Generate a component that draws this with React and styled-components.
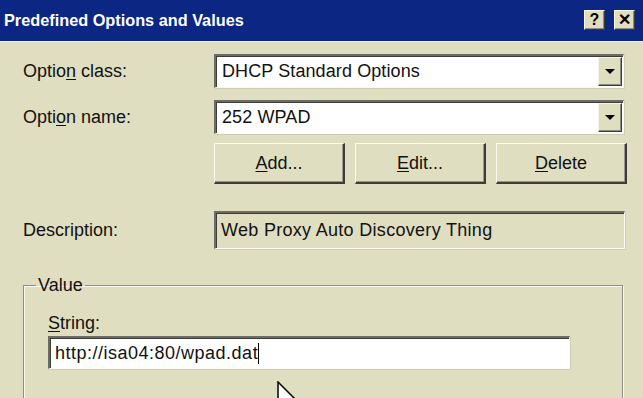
import React from "react";
import styled, { createGlobalStyle } from "styled-components";

const Global = createGlobalStyle`
  html, body { margin: 0; padding: 0; background: #E0DEC1; }
  body { font-family: "Liberation Sans", Arial, sans-serif; }
`;

const BG = "#E0DEC1";

const Window = styled.div`
  position: relative;
  width: 643px;
  height: 398px;
  overflow: hidden;
  background: ${BG};
  color: #111;
  font-family: "Liberation Sans", Arial, sans-serif;
  font-size: 18px;
`;

const TitleBar = styled.div`
  height: 41px;
  background: #0B2683;
  border-bottom: 1px solid #F2F0E2;
  display: flex;
  align-items: center;
  padding: 0 8px 0 4px;
`;

const Title = styled.div`
  flex: 1;
  color: #fff;
  font-weight: bold;
  font-size: 16.3px;
`;

const CaptionButtons = styled.div`
  display: flex;
  gap: 9px;
  margin-top: -2px;
`;

const CaptionButton = styled.div`
  width: 21px;
  height: 20px;
  box-sizing: border-box;
  background: ${BG};
  border-top: 1px solid #fbfaf1;
  border-left: 1px solid #fbfaf1;
  border-right: 1px solid #3a3a36;
  border-bottom: 1px solid #3a3a36;
  box-shadow: inset -1px -1px 0 #8c8b7f;
  display: flex;
  align-items: center;
  justify-content: center;
  font-weight: bold;
  font-size: 16px;
  color: #000;
  line-height: 1;
`;

const Body = styled.div`
  padding: 12px 0 0 23px;
  display: flex;
  flex-direction: column;
`;

const Row = styled.div`
  display: flex;
  align-items: center;
  margin-top: ${(p) => p.$gap || 0}px;
`;

const Label = styled.div`
  width: 191px;
  flex: none;
  line-height: 21px;
`;

const Key = styled.span`
  text-decoration: underline;
  text-underline-offset: 2px;
`;

const sunken = `
  box-sizing: border-box;
  border-top: 2px solid #6c6b64;
  border-left: 2px solid #6c6b64;
  border-right: 1px solid #fbfaf2;
  border-bottom: 1px solid #fbfaf2;
  box-shadow: inset 1px 1px 0 #3c3c38, 1px 1px 0 #cfcdb4;
`;

const Combo = styled.div`
  ${sunken}
  width: 410px;
  height: 34px;
  background: #fff;
  display: flex;
  align-items: center;
  padding-left: 6px;
`;

const ComboText = styled.div`
  flex: 1;
  white-space: nowrap;
  letter-spacing: 0.1px;
`;

const DropButton = styled.div`
  width: 24px;
  height: 29px;
  margin-right: 1px;
  box-sizing: border-box;
  background: ${BG};
  border-top: 1px solid #f6f5ea;
  border-left: 1px solid #f6f5ea;
  border-right: 1px solid #3c3c38;
  border-bottom: 1px solid #3c3c38;
  box-shadow: inset -1px -1px 0 #8c8b7f;
  display: flex;
  align-items: center;
  justify-content: center;
`;

const Arrow = styled.div`
  width: 0;
  height: 0;
  border-left: 5px solid transparent;
  border-right: 5px solid transparent;
  border-top: 5px solid #000;
`;

const ButtonRow = styled.div`
  display: flex;
  gap: 10px;
  margin-left: 191px;
  margin-top: 9px;
`;

const Button = styled.div`
  width: 131px;
  height: 41px;
  box-sizing: border-box;
  background: ${BG};
  border-top: 1px solid #fbfaf1;
  border-left: 1px solid #fbfaf1;
  border-right: 2px solid #3c3c38;
  border-bottom: 2px solid #3c3c38;
  box-shadow: inset -1px -1px 0 #9a998c;
  display: flex;
  align-items: center;
  justify-content: center;
`;

const DescBox = styled.div`
  ${sunken}
  width: 411px;
  height: 38px;
  background: ${BG};
  display: flex;
  align-items: center;
  padding-left: 5px;
  white-space: nowrap;
  letter-spacing: 0.3px;
`;

const Group = styled.fieldset`
  margin: 26px 0 0 0;
  width: 600px;
  height: 200px;
  box-sizing: border-box;
  border: 1px solid #8f8e82;
  box-shadow: inset 1px 1px 0 #fbfaf1, 1px 1px 0 #fbfaf1;
  padding: 0 0 0 24px;
`;

const Legend = styled.legend`
  margin-left: -12px;
  padding: 0 2px;
  line-height: 21px;
`;

const FieldLabel = styled.div`
  margin-top: 17px;
  line-height: 21px;
`;

const TextInput = styled.div`
  ${sunken}
  margin-top: 2px;
  width: 522px;
  height: 33px;
  background: #fff;
  display: flex;
  align-items: center;
  padding-left: 5px;
  white-space: nowrap;
  letter-spacing: 0.5px;
`;

const Caret = styled.span`
  display: inline-block;
  width: 1px;
  height: 21px;
  background: #000;
  margin-left: 0;
`;

const Pointer = styled.svg`
  position: absolute;
  left: 277px;
  top: 381px;
`;

export default function App() {
  return (
    <>
      <Global />
      <Window>
        <TitleBar>
          <Title>Predefined Options and Values</Title>
          <CaptionButtons>
            <CaptionButton>?</CaptionButton>
            <CaptionButton>✕</CaptionButton>
          </CaptionButtons>
        </TitleBar>
        <Body>
          <Row>
            <Label>
              Optio<Key>n</Key> class:
            </Label>
            <Combo>
              <ComboText>DHCP Standard Options</ComboText>
              <DropButton>
                <Arrow />
              </DropButton>
            </Combo>
          </Row>
          <Row $gap={12}>
            <Label>
              Opti<Key>o</Key>n name:
            </Label>
            <Combo>
              <ComboText>252 WPAD</ComboText>
              <DropButton>
                <Arrow />
              </DropButton>
            </Combo>
          </Row>
          <ButtonRow>
            <Button>
              <Key>A</Key>dd...
            </Button>
            <Button>
              <Key>E</Key>dit...
            </Button>
            <Button>
              <Key>D</Key>elete
            </Button>
          </ButtonRow>
          <Row $gap={27}>
            <Label>Description:</Label>
            <DescBox>Web Proxy Auto Discovery Thing</DescBox>
          </Row>
          <Group>
            <Legend>Value</Legend>
            <FieldLabel>
              <Key>S</Key>tring:
            </FieldLabel>
            <TextInput>
              http://isa04:80/wpad.dat
              <Caret />
            </TextInput>
          </Group>
        </Body>
        <Pointer width="22" height="32" viewBox="0 0 22 32">
          <path
            d="M1 1 L1 26 L7 20 L11 30 L15 28 L11 19 L19 19 Z"
            fill="#fff"
            stroke="#000"
            strokeWidth="1.5"
            strokeLinejoin="miter"
          />
        </Pointer>
      </Window>
    </>
  );
}
